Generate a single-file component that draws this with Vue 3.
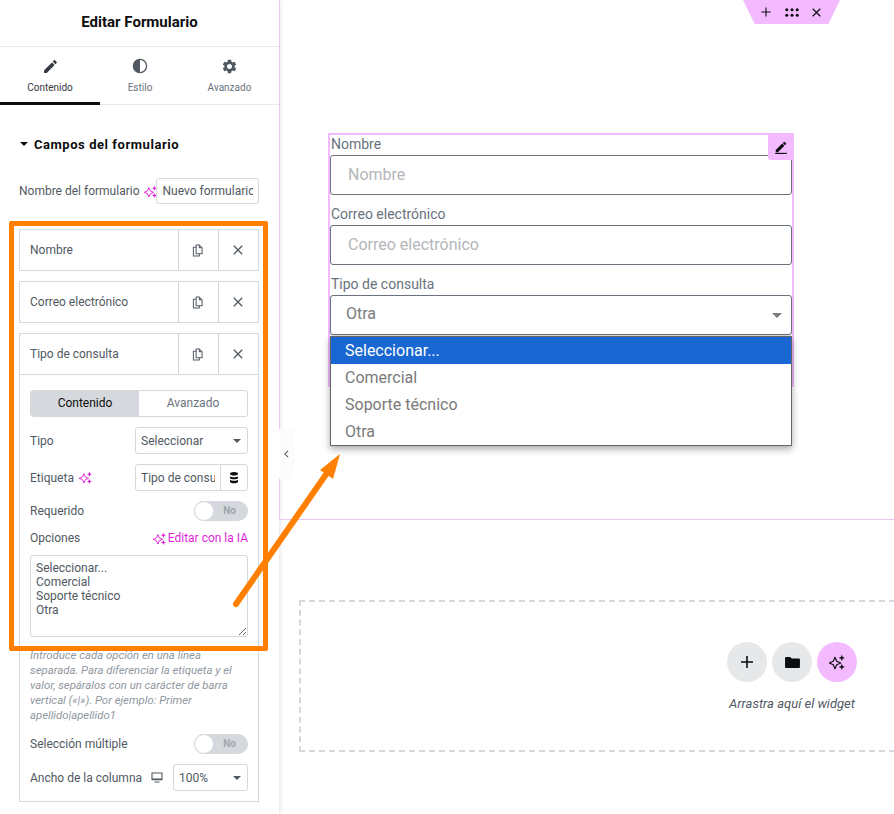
<script setup>
const optionsText = 'Seleccionar...\nComercial\nSoporte técnico\nOtra'
const items = ['Nombre', 'Correo electrónico', 'Tipo de consulta']
const fields = [
  { label: 'Nombre' },
  { label: 'Correo electrónico' }
]
const dropdown = ['Seleccionar...', 'Comercial', 'Soporte técnico', 'Otra']
</script>

<template>
  <div class="page">
    <svg class="sprite" width="0" height="0" aria-hidden="true">
      <symbol id="spark" viewBox="0 0 16 16">
        <path d="M6 3.200 7.700 7.300 11.800 9 7.700 10.700 6 14.800 4.300 10.700 .2 9 4.300 7.300Z" fill="none" stroke="currentColor" stroke-width="1.150" stroke-linejoin="round" />
        <path d="M12.800 .8 13.700 3 15.900 3.900 13.700 4.800 12.800 7 11.900 4.800 9.700 3.900 11.900 3Z" fill="currentColor" />
        <path d="M12.800 9.800 13.700 12 15.900 12.900 13.700 13.800 12.800 16 11.900 13.800 9.700 12.900 11.900 12Z" fill="currentColor" />
      </symbol>
      <symbol id="copy" viewBox="0 0 12 14">
        <path d="M4.500 1H8L11 4V10.500H4.500ZM8 1V4H11M4.500 3.500H1.500V13H8V10.500" fill="none" stroke="currentColor" stroke-width="1.100" stroke-linejoin="round" />
      </symbol>
      <symbol id="cross" viewBox="0 0 10 10">
        <path d="M.8.800 9.200 9.200M9.200.800.800 9.200" fill="none" stroke="currentColor" stroke-width="1.300" />
      </symbol>
      <symbol id="pencil" viewBox="0 0 24 24">
        <path d="M3 17.250V21h3.750L17.810 9.940l-3.750-3.750L3 17.250zM20.710 7.040c.390-.390.390-1.020 0-1.410l-2.340-2.340c-.390-.390-1.020-.390-1.410 0l-1.830 1.830 3.750 3.750 1.830-1.830z" fill="currentColor" />
      </symbol>
    </svg>

    <aside class="panel">
      <header class="panel-head">Editar Formulario</header>

      <nav class="tabs">
        <div class="tab tab-active">
          <svg class="tab-icon" viewBox="0 0 24 24"><use href="#pencil" /></svg>
          <span>Contenido</span>
        </div>
        <div class="tab tab-mid">
          <svg class="tab-icon" viewBox="0 0 16 16">
            <circle cx="8" cy="8" r="6.600" fill="none" stroke="currentColor" stroke-width="1.300" />
            <path d="M8 1.400a6.600 6.600 0 0 0 0 13.200Z" fill="currentColor" />
          </svg>
          <span>Estilo</span>
        </div>
        <div class="tab">
          <svg class="tab-icon" viewBox="0 0 24 24">
            <path fill="currentColor" d="M19.140 12.940c.040-.300.060-.610.060-.940 0-.320-.020-.640-.070-.940l2.030-1.580c.180-.140.230-.410.120-.610l-1.920-3.320c-.120-.220-.370-.290-.590-.220l-2.390.960c-.500-.380-1.030-.700-1.620-.940l-.360-2.540c-.040-.240-.240-.410-.480-.410h-3.840c-.240 0-.430.170-.470.410l-.360 2.540c-.590.240-1.130.570-1.620.940l-2.390-.960c-.220-.080-.470 0-.590.220L2.740 8.870c-.120.210-.080.470.120.610l2.030 1.580c-.050.300-.090.630-.090.940s.020.640.070.940l-2.030 1.580c-.180.140-.230.410-.120.610l1.920 3.320c.120.220.370.290.590.220l2.390-.960c.500.380 1.030.700 1.620.940l.360 2.540c.050.240.240.410.480.410h3.840c.240 0 .440-.170.470-.41l.360-2.540c.590-.240 1.130-.560 1.620-.94l2.390.960c.220.080.470 0 .590-.220l1.920-3.320c.120-.220.070-.470-.120-.610l-2.010-1.580zM12 15.600c-1.980 0-3.600-1.620-3.600-3.600s1.620-3.600 3.600-3.600 3.600 1.620 3.600 3.600-1.620 3.600-3.600 3.600z" />
          </svg>
          <span>Avanzado</span>
        </div>
      </nav>

      <div class="panel-body">
        <h2 class="section-title"><i class="caret caret-dark"></i>Campos del formulario</h2>

        <div class="name-row">
          <span class="name-label">Nombre del formulario</span>
          <svg class="spark spark-name"><use href="#spark" /></svg>
          <input class="ctl name-input" value="Nuevo formulario" readonly />
        </div>

        <div class="repeater">
          <div v-for="(item, i) in items" :key="item" class="item">
            <div class="item-head" :class="{ 'item-head-open': i === 2 }">
              <span class="item-title">{{ item }}</span>
              <span class="item-btn"><svg class="ico-copy"><use href="#copy" /></svg></span>
              <span class="item-btn"><svg class="ico-cross"><use href="#cross" /></svg></span>
            </div>

            <div v-if="i === 2" class="item-body">
              <div class="seg">
                <span class="seg-on">Contenido</span>
                <span class="seg-off">Avanzado</span>
              </div>

              <div class="row">
                <span>Tipo</span>
                <div class="ctl sel sel-wide">Seleccionar<i class="caret"></i></div>
              </div>

              <div class="row">
                <span class="label-spark">Etiqueta <svg class="spark"><use href="#spark" /></svg></span>
                <div class="group">
                  <input class="group-input" value="Tipo de consulta" readonly />
                  <span class="group-btn">
                    <svg viewBox="0 0 12 14" width="12" height="14">
                      <ellipse cx="6" cy="2.800" rx="4" ry="1.800" fill="#0c0d0e" />
                      <path d="M2 5.200c1 1.300 7 1.300 8 0v2c-1 1.300-7 1.300-8 0zM2 8.800c1 1.300 7 1.300 8 0v2.200c-1 1.700-7 1.700-8 0z" fill="#0c0d0e" />
                    </svg>
                  </span>
                </div>
              </div>

              <div class="row row-toggle">
                <span>Requerido</span>
                <div class="toggle"><i class="knob"></i><b>No</b></div>
              </div>

              <div class="row row-opts">
                <span>Opciones</span>
                <span class="ai-link"><svg class="spark"><use href="#spark" /></svg>Editar con la IA</span>
              </div>

              <textarea class="opts" :value="optionsText" readonly></textarea>

              <p class="help">Introduce cada opción en una línea separada. Para diferenciar la etiqueta y el valor, sepáralos con un carácter de barra vertical («|»). Por ejemplo: Primer apellido|apellido1</p>

              <div class="row row-toggle row-multi">
                <span>Selección múltiple</span>
                <div class="toggle"><i class="knob"></i><b>No</b></div>
              </div>

              <div class="row">
                <span class="label-device">Ancho de la columna
                  <svg viewBox="0 0 12 11" width="12" height="11">
                    <path d="M1 1h10v6.600H1z" fill="none" stroke="#515962" stroke-width="1.100" />
                    <path d="M1 6.500h10v1.500H1zM3.500 9.500h5v1h-5z" fill="#515962" />
                  </svg>
                </span>
                <div class="ctl sel sel-small">100%<i class="caret"></i></div>
              </div>
            </div>
          </div>
        </div>
      </div>
    </aside>

    <main class="canvas">
      <section class="section">
        <div class="widget">
          <div v-for="f in fields" :key="f.label" class="field">
            <label class="f-label">{{ f.label }}</label>
            <input class="f-input" :placeholder="f.label" readonly />
          </div>
          <div class="field">
            <label class="f-label">Tipo de consulta</label>
            <div class="f-select">Otra<i class="caret caret-big"></i></div>
          </div>
          <ul class="dropdown">
            <li v-for="(o, i) in dropdown" :key="o" :class="{ 'dd-on': i === 0 }">{{ o }}</li>
          </ul>
          <span class="edit-handle"><svg width="14" height="14" viewBox="0 0 24 24"><use href="#pencil" /><path d="M2 23h20" stroke="#0c0d0e" stroke-width="2" /></svg></span>
        </div>
      </section>

      <section class="drop">
        <div class="drop-btns">
          <span class="circle">
            <svg viewBox="0 0 12 12" width="12" height="12"><path d="M6 0v12M0 6h12" stroke="#0c0d0e" stroke-width="1.600" /></svg>
          </span>
          <span class="circle">
            <svg viewBox="0 0 16 14" width="15" height="13"><path d="M0 2.200C0 1.500.500 1 1.200 1h4.300l1.700 1.700h7.600c.700 0 1.200.500 1.200 1.200v8c0 .700-.500 1.100-1.200 1.100H1.200C.500 13 0 12.600 0 11.900z" fill="#0c0d0e" /></svg>
          </span>
          <span class="circle circle-ai"><svg class="spark-big"><use href="#spark" /></svg></span>
        </div>
        <p class="drop-text">Arrastra aquí el widget</p>
      </section>
    </main>

    <div class="top-handle">
      <svg viewBox="0 0 12 12" width="10" height="10"><path d="M6 .500v11M.500 6h11" stroke="#0c0d0e" stroke-width="1.300" /></svg>
      <svg viewBox="0 0 14 9" width="14" height="9" fill="#0c0d0e">
        <circle cx="1.800" cy="1.800" r="1.500" /><circle cx="7" cy="1.800" r="1.500" /><circle cx="12.200" cy="1.800" r="1.500" />
        <circle cx="1.800" cy="7.200" r="1.500" /><circle cx="7" cy="7.200" r="1.500" /><circle cx="12.200" cy="7.200" r="1.500" />
      </svg>
      <svg width="9" height="9" class="ink"><use href="#cross" /></svg>
    </div>

    <div class="collapse">
      <svg viewBox="0 0 6 10" width="5" height="8"><path d="M5 1 1 5l4 4" fill="none" stroke="#515962" stroke-width="1.300" /></svg>
    </div>

    <div class="mark-box"></div>
    <svg class="mark-arrow" width="894" height="814" viewBox="0 0 894 814" aria-hidden="true">
      <path d="M236 604 327 473" stroke="#ff8000" stroke-width="6" stroke-linecap="round" fill="none" />
      <path d="M340 454 320 470 333 479Z" fill="#ff8000" />
    </svg>
  </div>
</template>

<style>
html, body { margin: 0; padding: 0; background: #fff; }
</style>

<style scoped>
.page {
  position: relative;
  display: flex;
  width: 894px;
  height: 814px;
  overflow: hidden;
  background: #fff;
  font-family: Roboto, "Liberation Sans", sans-serif;
  font-size: 12px;
  color: #515962;
}
.sprite { position: absolute; }
.panel {
  flex: 0 0 279px;
  width: 279px;
  height: 814px;
  box-shadow: 1px 0 4px rgba(0, 0, 0, .12);
  background: #fff;
  overflow: hidden;
}
.panel-head {
  height: 46px;
  line-height: 44px;
  text-align: center;
  font-size: 15px;
  font-weight: 700;
  color: #0c0d0e;
  border-bottom: 1px solid #e6e8ea;
}
.tabs {
  display: grid;
  grid-template-columns: 100px 80px 99px;
  height: 57px;
  border-bottom: 1px solid #e6e8ea;
}
.tab {
  display: flex;
  flex-direction: column;
  align-items: center;
  padding-top: 11px;
  box-sizing: border-box;
  font-size: 10px;
  line-height: 13px;
  color: #69727d;
}
.tab-icon { width: 17px; height: 17px; margin-bottom: 6px; color: #515962; }
.tab-mid .tab-icon { width: 16px; height: 16px; margin-bottom: 7px; }
.tab-active { color: #333a41; border-bottom: 3px solid #0c0d0e; height: 58px; }
.tab-active .tab-icon { color: #333a41; }

.panel-body { padding: 0 20px 0 19px; }
.section-title {
  display: flex;
  align-items: center;
  margin: 29px 0 0;
  height: 20px;
  font-size: 13px;
  font-weight: 700;
  letter-spacing: .55px;
  color: #0c0d0e;
}
.section-title .caret { margin: 0 6px 0 1px; }
.caret {
  display: inline-block;
  width: 0;
  height: 0;
  border-left: 4.500px solid transparent;
  border-right: 4.500px solid transparent;
  border-top: 4.500px solid #515962;
}
.caret-dark { border-top-color: #0c0d0e; }
.name-row {
  display: flex;
  align-items: center;
  height: 26px;
  margin-top: 24px;
}
.name-label { flex: none; white-space: nowrap; }
.spark { width: 13px; height: 13px; color: #e01fd8; }
.spark-name { margin-left: 5px; flex: none; }
.ctl {
  box-sizing: border-box;
  border: 1px solid #d5d8dc;
  border-radius: 3px;
  background: #fff;
  font: inherit;
  color: #515962;
}
.name-input {
  flex: none;
  width: 103px;
  height: 26px;
  margin-left: -1px;
  padding: 0 5px;
  outline: none;
}
.repeater { margin-top: 25px; }
.item { border: 1px solid #d5d8dc; margin-bottom: 10px; width: 240px; box-sizing: border-box; }
.item-head { display: flex; height: 40px; align-items: stretch; }
.item-head-open { border-bottom: 1px solid #d5d8dc; box-sizing: content-box; }
.item-title { flex: 1; line-height: 41px; padding-left: 10px; }
.item-btn {
  flex: 0 0 39px;
  border-left: 1px solid #d5d8dc;
  display: flex;
  align-items: center;
  justify-content: center;
  color: #515962;
}
.ico-copy { width: 11px; height: 13px; margin-right: 2px; }
.ico-cross { width: 10px; height: 10px; margin-right: 1px; }
.item-body { padding: 15px 10px 10px; }
.seg {
  display: grid;
  grid-template-columns: 108px 1fr;
  height: 27px;
  box-sizing: border-box;
  border: 1px solid #d5d8dc;
  border-radius: 3px;
  overflow: hidden;
  line-height: 25px;
  text-align: center;
}
.seg-on { background: #d5d8dc; color: #0c0d0e; }
.seg-off { color: #69727d; }
.row {
  display: flex;
  align-items: center;
  justify-content: space-between;
  min-height: 27px;
  margin-top: 10px;
}
.sel {
  height: 27px;
  display: flex;
  align-items: center;
  justify-content: space-between;
  padding: 0 6px 0 5px;
}
.sel-wide { width: 113px; }
.sel-small { width: 75px; }
.label-spark { display: inline-flex; align-items: center; gap: 5px; }
.label-device { display: inline-flex; align-items: center; gap: 9px; }
.group {
  display: flex;
  width: 113px;
  height: 27px;
  box-sizing: border-box;
  border: 1px solid #d5d8dc;
  border-radius: 3px;
}
.group-input {
  width: 84px;
  box-sizing: border-box;
  padding: 0 5px;
  border: 0;
  outline: none;
  background: transparent;
  font: inherit;
  color: #515962;
}
.group-btn {
  flex: 1;
  border-left: 1px solid #d5d8dc;
  display: flex;
  align-items: center;
  justify-content: center;
}
.row-toggle { min-height: 20px; }
.toggle {
  position: relative;
  width: 54px;
  height: 20px;
  border-radius: 10px;
  background: #d5d8dc;
}
.knob {
  position: absolute;
  left: 0;
  top: 0;
  width: 18px;
  height: 18px;
  border: 1px solid #d5d8dc;
  border-radius: 50%;
  background: #fff;
}
.toggle b {
  position: absolute;
  right: 12px;
  top: 0;
  line-height: 20px;
  font-size: 10px;
  font-weight: 700;
  color: #9da5ae;
}
.row-opts { min-height: 18px; margin-top: 8px; }
.ai-link { display: inline-flex; align-items: center; gap: 2px; color: #e01fd8; }
.opts {
  display: block;
  width: 218px;
  height: 82px;
  margin-top: 8px;
  box-sizing: border-box;
  padding: 5px;
  border: 1px solid #d5d8dc;
  border-radius: 3px;
  outline: none;
  font: inherit;
  line-height: 14px;
  color: #515962;
  resize: vertical;
}
.help {
  margin: 11px 0 0;
  font-size: 11.350px;
  font-style: italic;
  line-height: 15px;
  color: #8f97a0;
}
.row-multi { margin-top: 11px; }

.canvas { flex: 1; min-width: 0; overflow: hidden; }
.section {
  box-sizing: border-box;
  height: 520px;
  padding: 133px 0 0 48px;
  border-left: 1px solid #edc8f5;
  border-bottom: 1px solid #edc4f5;
}
.widget {
  position: relative;
  box-sizing: border-box;
  width: 466px;
  height: 254px;
  border: 2px solid #f3baff;
  font-size: 14px;
  color: #69727d;
}
.field { margin-bottom: 10px; }
.f-label { display: block; height: 20px; line-height: 18px; padding-left: 1px; }
.f-input, .f-select {
  display: block;
  box-sizing: border-box;
  width: 462px;
  height: 40px;
  border: 1px solid #69727d;
  border-radius: 3px;
  background: #fff;
  font: inherit;
  font-size: 16px;
  outline: none;
}
.f-input { padding: 0 17px 2px; }
.f-input::placeholder { color: #b4b6b9; opacity: 1; }
.f-select {
  display: flex;
  align-items: center;
  justify-content: space-between;
  padding: 0 9px 3px 15px;
  color: #7a7a7a;
  box-shadow: 0 1px 2px rgba(0, 0, 0, .15);
}
.caret-big { border-left-width: 5.500px; border-right-width: 5.500px; border-top-width: 5.500px; border-top-color: #7a7a7a; margin-top: 3px; }
.dropdown {
  position: absolute;
  left: 0;
  top: 201px;
  z-index: 2;
  width: 462px;
  height: 110px;
  box-sizing: border-box;
  margin: 0;
  padding: 0;
  list-style: none;
  background: #fff;
  border: 1px solid #666;
  box-shadow: 0 3px 7px rgba(0, 0, 0, .35);
  font-size: 16px;
  color: #7a7a7a;
}
.dropdown li { height: 27px; line-height: 27px; padding-left: 14px; }
.dropdown .dd-on { background: #1967d2; color: #fff; }
.edit-handle {
  position: absolute;
  right: -2px;
  top: -2px;
  width: 26px;
  height: 27px;
  display: flex;
  align-items: center;
  justify-content: center;
  background: #f3baff;
  border-bottom-left-radius: 3px;
  color: #0c0d0e;
}
.drop {
  box-sizing: border-box;
  width: 986px;
  height: 152px;
  margin: 80px 0 0 20px;
  border: 2px dashed #d5d8dc;
  padding-top: 40px;
  text-align: center;
}
.drop-btns { display: flex; justify-content: center; gap: 5px; }
.circle {
  width: 40px;
  height: 40px;
  border-radius: 50%;
  background: #e6e8ea;
  display: flex;
  align-items: center;
  justify-content: center;
}
.circle-ai { background: #f3baff; }
.spark-big { width: 16px; height: 16px; color: #0c0d0e; }
.drop-text {
  margin: 14px 0 0;
  font-size: 13px;
  font-style: italic;
  line-height: 16px;
  color: #515962;
}
.top-handle {
  position: absolute;
  left: 743px;
  top: 0;
  width: 97px;
  height: 24px;
  box-sizing: border-box;
  padding: 0 19px 0 18px;
  display: flex;
  align-items: center;
  justify-content: space-between;
  background: #f3baff;
  clip-path: polygon(0 0, 100% 0, 88% 100%, 12% 100%);
}
.ink { color: #0c0d0e; }
.collapse {
  position: absolute;
  left: 279px;
  top: 429px;
  width: 15px;
  height: 50px;
  display: flex;
  align-items: center;
  justify-content: center;
  background: #fcfcfc;
}
.mark-box {
  position: absolute;
  left: 9px;
  top: 221px;
  width: 259px;
  height: 430px;
  box-sizing: border-box;
  border: 5px solid #ff8000;
  border-radius: 2px;
  pointer-events: none;
}
.mark-arrow { position: absolute; left: 0; top: 0; pointer-events: none; }
</style>
